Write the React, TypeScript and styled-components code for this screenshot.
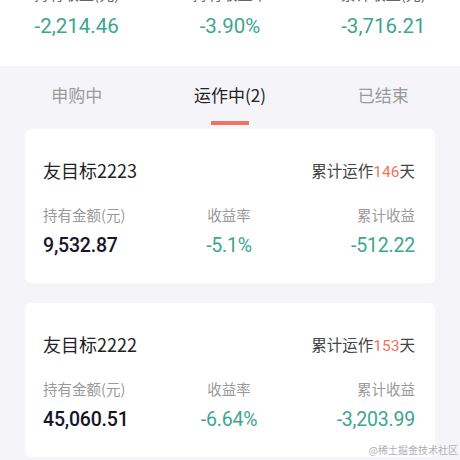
import styled, { createGlobalStyle } from 'styled-components';

const GlobalStyle = createGlobalStyle`
  html, body {
    margin: 0;
    padding: 0;
    background: #f5f5f9;
    overflow: hidden;
  }
  body {
    font-family: 'Noto Sans CJK SC', 'Noto Sans', sans-serif;
  }
`;

const green = '#3da68b';
const numFont = `Roboto, 'Noto Sans CJK SC', sans-serif`;

const Page = styled.div`
  position: relative;
  width: 460px;
  height: 460px;
  overflow: hidden;
`;

const Summary = styled.div`
  display: grid;
  grid-template-columns: repeat(3, 1fr);
  background: #fff;
  margin-top: -22px;
  height: 88px;
`;

const SummaryCell = styled.div`
  display: flex;
  flex-direction: column;
  align-items: center;
`;

const SummaryLabel = styled.div`
  font-size: 15px;
  line-height: 22px;
  color: #666;
  margin-top: 5px;
`;

const SummaryValue = styled.div`
  font-family: ${numFont};
  font-size: 20.5px;
  line-height: 26px;
  margin-top: 8px;
  color: ${green};
`;

const Tabs = styled.div`
  display: grid;
  grid-template-columns: repeat(3, 1fr);
  height: 63px;
`;

const Tab = styled.div<{ $active?: boolean }>`
  display: flex;
  flex-direction: column;
  align-items: center;
  padding-top: 18px;
  font-size: 17px;
  line-height: 22px;
  color: ${({ $active }) => ($active ? '#222' : '#9a9a9a')};
`;

const Indicator = styled.div`
  width: 38px;
  height: 4px;
  margin-top: 15px;
  background: #ec7663;
`;

const List = styled.div`
  display: flex;
  flex-direction: column;
  gap: 20px;
  padding: 0 25px;
`;

const Card = styled.div`
  background: #fff;
  border-radius: 6px;
  padding: 28px 20px 25px 18px;
`;

const CardHead = styled.div`
  display: flex;
  justify-content: space-between;
  align-items: center;
  height: 26px;
`;

const Title = styled.div`
  font-size: 18px;
  color: #222;
`;

const Days = styled.div`
  font-size: 15.5px;
  color: #444;
`;

const DaysNum = styled.span`
  font-family: ${numFont};
  color: #f0735a;
`;

const Stats = styled.div`
  display: grid;
  grid-template-columns: 1fr 1fr 1fr;
  margin-top: 22px;
`;

const Stat = styled.div<{ $align: 'flex-start' | 'center' | 'flex-end' }>`
  display: flex;
  flex-direction: column;
  align-items: ${({ $align }) => $align};
`;

const StatLabel = styled.div`
  font-size: 14.5px;
  line-height: 20px;
  color: #9a9a9a;
`;

const StatValue = styled.div<{ $tone: 'dark' | 'green' }>`
  font-family: ${numFont};
  font-size: 19.5px;
  line-height: 24px;
  margin-top: 9px;
  letter-spacing: -0.2px;
  font-weight: ${({ $tone }) => ($tone === 'dark' ? 500 : 400)};
  color: ${({ $tone }) => ($tone === 'dark' ? '#161629' : green)};
`;

const Watermark = styled.div`
  position: absolute;
  right: 2px;
  bottom: 3px;
  font-size: 10px;
  color: #b0b0b0;
  font-family: 'Noto Sans CJK SC', sans-serif;
`;

const funds = [
  { name: '友目标2223', days: 146, amount: '9,532.87', rate: '-5.1%', profit: '-512.22' },
  { name: '友目标2222', days: 153, amount: '45,060.51', rate: '-6.64%', profit: '-3,203.99' },
];

export default function App() {
  return (
    <Page>
      <GlobalStyle />
      <Summary>
        <SummaryCell>
          <SummaryLabel>持有收益(元)</SummaryLabel>
          <SummaryValue>-2,214.46</SummaryValue>
        </SummaryCell>
        <SummaryCell>
          <SummaryLabel>持有收益率</SummaryLabel>
          <SummaryValue>-3.90%</SummaryValue>
        </SummaryCell>
        <SummaryCell>
          <SummaryLabel>累计收益(元)</SummaryLabel>
          <SummaryValue>-3,716.21</SummaryValue>
        </SummaryCell>
      </Summary>
      <Tabs>
        <Tab>申购中</Tab>
        <Tab $active>
          运作中(2)
          <Indicator />
        </Tab>
        <Tab>已结束</Tab>
      </Tabs>
      <List>
        {funds.map((f) => (
          <Card key={f.name}>
            <CardHead>
              <Title>{f.name}</Title>
              <Days>
                累计运作<DaysNum>{f.days}</DaysNum>天
              </Days>
            </CardHead>
            <Stats>
              <Stat $align="flex-start">
                <StatLabel>持有金额(元)</StatLabel>
                <StatValue $tone="dark">{f.amount}</StatValue>
              </Stat>
              <Stat $align="center">
                <StatLabel>收益率</StatLabel>
                <StatValue $tone="green">{f.rate}</StatValue>
              </Stat>
              <Stat $align="flex-end">
                <StatLabel>累计收益</StatLabel>
                <StatValue $tone="green">{f.profit}</StatValue>
              </Stat>
            </Stats>
          </Card>
        ))}
      </List>
      <Watermark>@稀土掘金技术社区</Watermark>
    </Page>
  );
}
